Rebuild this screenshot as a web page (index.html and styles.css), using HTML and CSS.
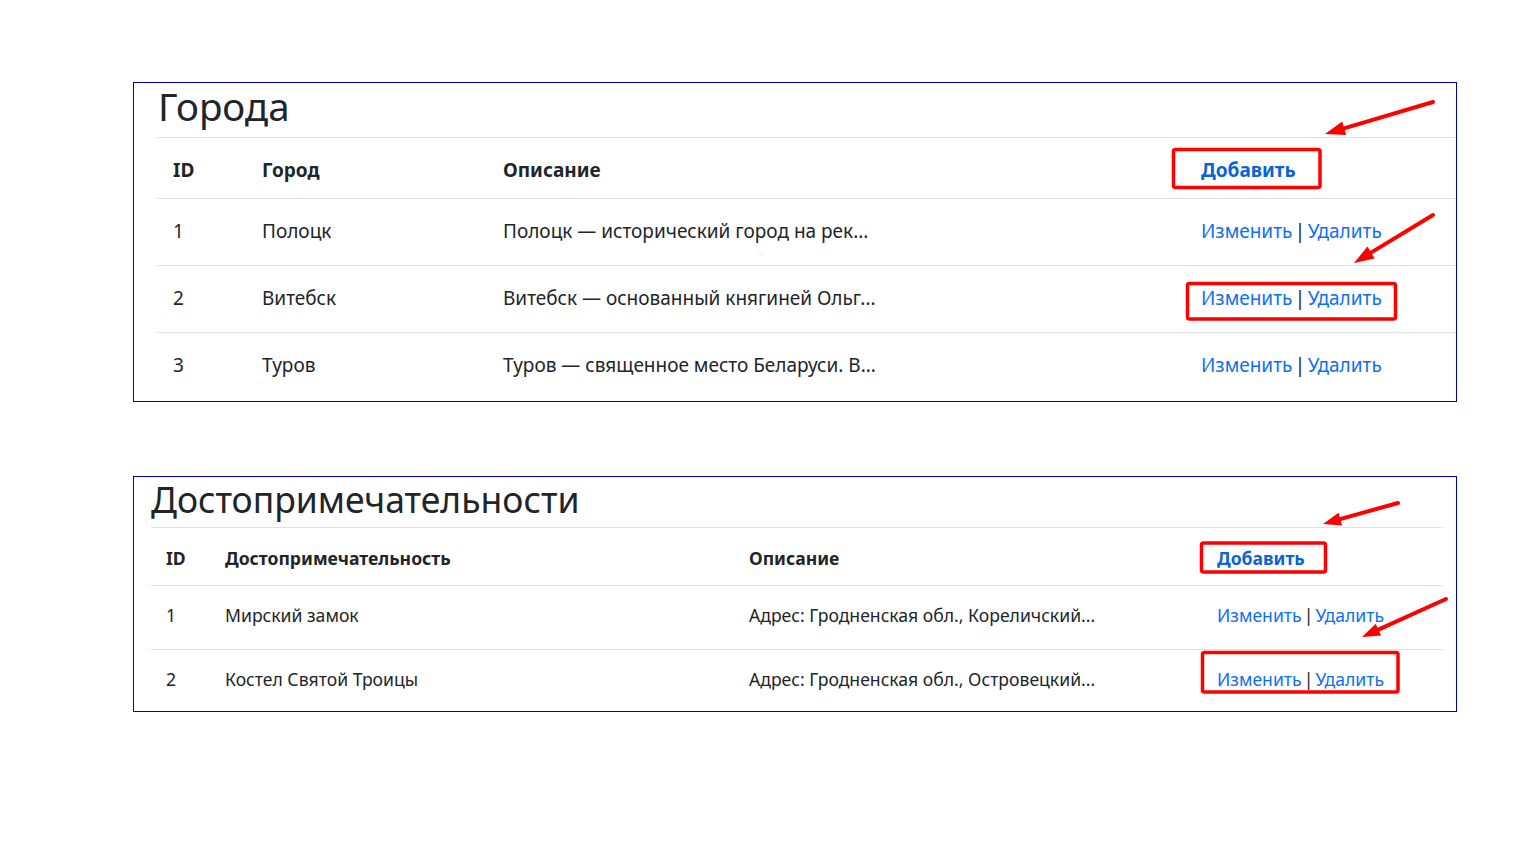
FILE: index.html
```html
<!DOCTYPE html>
<html lang="ru">
<head>
<meta charset="utf-8">
<title>Города и достопримечательности</title>
<link rel="stylesheet" href="styles.css">
</head>
<body>
<main class="page">
  <section class="card card-cities">
    <h2 class="card-title">Города</h2>
    <table class="grid">
      <colgroup><col class="c-id"><col class="c-name"><col class="c-desc"><col class="c-act"></colgroup>
      <thead>
        <tr><th>ID</th><th>Город</th><th>Описание</th><th><a href="#" class="add">Добавить</a></th></tr>
      </thead>
      <tbody>
        <tr><td>1</td><td>Полоцк</td><td>Полоцк — исторический город на рек...</td><td class="actions"><a href="#">Изменить</a> | <a href="#">Удалить</a></td></tr>
        <tr><td>2</td><td>Витебск</td><td>Витебск — основанный княгиней Ольг...</td><td class="actions"><a href="#">Изменить</a> | <a href="#">Удалить</a></td></tr>
        <tr><td>3</td><td>Туров</td><td>Туров — священное место Беларуси. В...</td><td class="actions"><a href="#">Изменить</a> | <a href="#">Удалить</a></td></tr>
      </tbody>
    </table>
  </section>

  <section class="card card-sights">
    <h2 class="card-title">Достопримечательности</h2>
    <table class="grid">
      <colgroup><col class="c-id"><col class="c-name"><col class="c-desc"><col class="c-act"></colgroup>
      <thead>
        <tr><th>ID</th><th>Достопримечательность</th><th>Описание</th><th><a href="#" class="add">Добавить</a></th></tr>
      </thead>
      <tbody>
        <tr><td>1</td><td>Мирский замок</td><td>Адрес: Гродненская обл., Кореличский...</td><td class="actions"><a href="#">Изменить</a> | <a href="#">Удалить</a></td></tr>
        <tr><td>2</td><td>Костел Святой Троицы</td><td>Адрес: Гродненская обл., Островецкий...</td><td class="actions"><a href="#">Изменить</a> | <a href="#">Удалить</a></td></tr>
      </tbody>
    </table>
  </section>
</main>

<svg class="marks" width="1535" height="863" viewBox="0 0 1535 863" aria-hidden="true">
  <g fill="none" stroke="#ff0000" stroke-width="3.5" stroke-linejoin="round">
    <rect x="1173.5" y="149.5" width="146.5" height="38" rx="2"/>
    <rect x="1187.5" y="283.5" width="208" height="35.5" rx="2"/>
    <rect x="1201.5" y="543" width="124" height="29" rx="2"/>
    <rect x="1202.5" y="652.5" width="195.5" height="39.5" rx="2"/>
  </g>
  <g stroke="#ff0000" stroke-width="4" stroke-linecap="round">
    <line x1="1433" y1="102" x2="1344" y2="128.3"/>
    <line x1="1433" y1="215" x2="1371" y2="252.6"/>
    <line x1="1398" y1="503" x2="1340" y2="519.1"/>
    <line x1="1446" y1="599" x2="1378.4" y2="629.6"/>
  </g>
  <g fill="#ff0000">
    <polygon points="1325,134 1346.2,135 1342.2,121.6"/>
    <polygon points="1354,263 1374.7,258.6 1367.5,246.6"/>
    <polygon points="1323,524 1342.1,525.4 1338.5,512.8"/>
    <polygon points="1362,637 1381.1,635.5 1375.7,623.7"/>
  </g>
</svg>
</body>
</html>
```

FILE: styles.css
```css
html, body {
  margin: 0;
  padding: 0;
  background: #ffffff;
}

body {
  position: relative;
  width: 1535px;
  height: 863px;
  overflow: hidden;
  font-family: "Noto Sans", "Open Sans", "DejaVu Sans", sans-serif;
  color: #212529;
}

.page {
  display: flex;
  flex-direction: column;
  gap: 74px;
  padding: 82px 0 0 133px;
}

.card {
  box-sizing: border-box;
  width: 1324px;
  border: 1px solid #0000b4;
  background: #fff;
}

.card-cities {
  height: 320px;
  padding: 0 0 0 23px;
  font-size: 19px;
}

.card-sights {
  height: 236px;
  padding: 0 13px 0 17px;
  font-size: 17.6px;
}

.card-title {
  margin: 0;
  font-weight: 400;
  border-bottom: 1px solid #dee2e6;
}

.card-cities .card-title {
  font-size: 38.5px;
  line-height: 47px;
  padding: 0 0 7px 1px;
}

.card-sights .card-title {
  font-size: 35.5px;
  line-height: 45px;
  padding: 0 0 5px 0;
}

.grid {
  width: 100%;
  border-collapse: collapse;
  table-layout: fixed;
}

.grid th,
.grid td {
  text-align: left;
  padding: 0 0 0 16px;
  vertical-align: middle;
  white-space: nowrap;
}

.grid th {
  font-weight: 700;
  padding-top: 4px;
}

.grid td {
  padding-bottom: 1px;
}

.grid td.actions {
  word-spacing: -2.5px;
}

.grid tr {
  border-bottom: 1px solid #dee2e6;
}

.grid tbody tr:last-child {
  border-bottom: none;
}

.card-cities .grid thead tr { height: 60px; }
.card-cities .grid tbody tr { height: 67px; }
.card-cities .c-id { width: 89px; }
.card-cities .c-name { width: 241px; }
.card-cities .c-desc { width: 698px; }
.card-cities .c-act { width: 271px; }

.card-sights .grid th,
.card-sights .grid td {
  padding-left: 15px;
}
.card-sights .grid td {
  padding-bottom: 4px;
}
.card-sights .grid thead tr { height: 57px; }
.card-sights .grid tbody tr { height: 64px; }
.card-sights .c-id { width: 59px; }
.card-sights .c-name { width: 524px; }
.card-sights .c-desc { width: 468px; }
.card-sights .c-act { width: 241px; }

a {
  color: #0d6efd;
  text-decoration: none;
}

a.add {
  font-weight: 700;
  color: #0a63d8;
}

.marks {
  position: absolute;
  top: 0;
  left: 0;
  pointer-events: none;
}
```
